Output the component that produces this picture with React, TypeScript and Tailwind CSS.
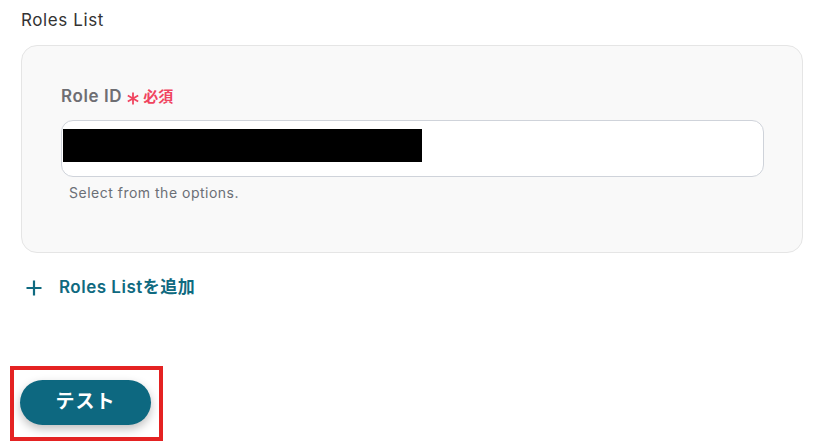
import React from "react";

export default function App() {
  return (
    <div
      className="w-[815px] h-[442px] bg-white overflow-hidden relative"
      style={{ fontFamily: 'Inter, "Noto Sans CJK JP", sans-serif' }}
    >
      <div className="pl-[21px] pr-[12px] pt-[9px]">
        <div className="text-[17px] leading-[22px] tracking-[0.6px] text-[#333333] font-normal">Roles List</div>
        <div className="mt-[14px] rounded-[16px] border border-[#e5e5e5] bg-[#f9f9f9] pl-[39px] pr-[38px] pt-[39px] pb-[49px]">
          <div className="flex items-center h-[24px]">
            <span className="text-[17px] font-semibold tracking-[0.6px] text-[#6e6e73]">Role ID</span>
            <svg width="12" height="13" viewBox="0 0 12 13" className="ml-[5px] mt-[3px] text-[#f0445f]">
              <path
                d="M6 0.5V12.5M0.8 3.5L11.2 9.5M11.2 3.5L0.8 9.5"
                stroke="currentColor"
                strokeWidth="1.8"
              />
            </svg>
            <span className="ml-[4px] text-[15px] font-semibold text-[#f0445f]">必須</span>
          </div>
          <div className="mt-[11px] h-[57px] rounded-[12px] border border-[#cfd3da] bg-white pl-[1px] pt-[8px]">
            <div className="w-[359px] h-[33px] bg-black"></div>
          </div>
          <div className="mt-[6px] pl-[8px] text-[14px] leading-[20px] tracking-[0.5px] text-[#6b6f76]">
            Select from the options.
          </div>
        </div>
        <div className="mt-[24px] flex items-center h-[22px] text-[#0f6a80]">
          <svg width="16" height="16" viewBox="0 0 16 16" className="ml-[5px]">
            <path d="M8 0.5V15.5M0.5 8H15.5" stroke="currentColor" strokeWidth="2.2" />
          </svg>
          <span className="ml-[17px] text-[17px] font-semibold tracking-[0.5px]">Roles Listを追加</span>
        </div>
        <div className="mt-[67px] -ml-[11px] inline-block border-4 border-[#e42222] pt-[10px] pl-[6px] pr-[8px] pb-[12px]">
          <button className="w-[131px] h-[45px] rounded-full bg-[#0d6880] text-white text-[19px] tracking-[1px] font-bold shadow-[0_4px_10px_rgba(0,0,0,0.25)]">
            テスト
          </button>
        </div>
      </div>
    </div>
  );
}
